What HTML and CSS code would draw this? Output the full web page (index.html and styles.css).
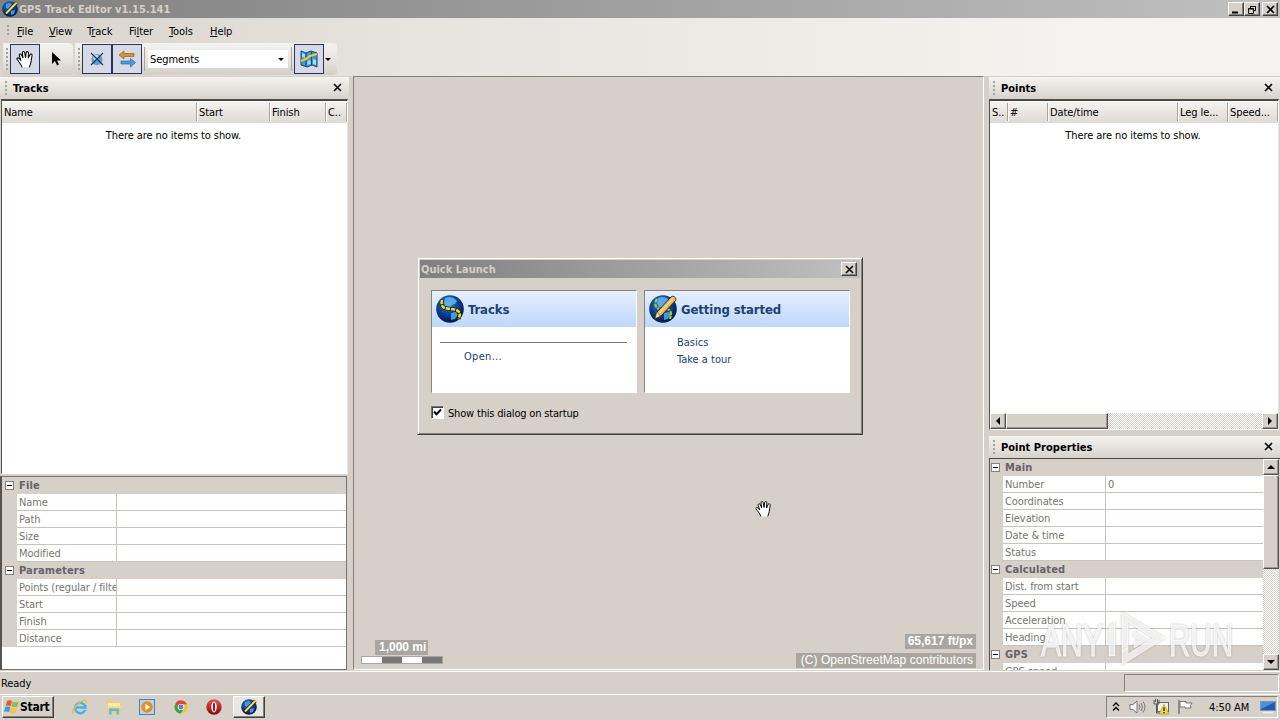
FILE: index.html
```html
<!DOCTYPE html>
<html lang="en">
<head>
<meta charset="utf-8">
<title>GPS Track Editor</title>
<link rel="stylesheet" href="styles.css">
</head>
<body>
<svg class="defs" width="0" height="0">
  <defs>
    <radialGradient id="globeFill" cx="42%" cy="32%" r="66%"><stop offset="0" stop-color="#2f86da"/><stop offset=".55" stop-color="#0c4394"/><stop offset="1" stop-color="#031a48"/></radialGradient>
    <linearGradient id="pencilFill" x1="0" y1="0" x2="1" y2="1"><stop offset="0" stop-color="#ffe9a6"/><stop offset="1" stop-color="#d98a1c"/></linearGradient>
    <linearGradient id="redFill" x1="0" y1="0" x2="0" y2="1"><stop offset="0" stop-color="#e2585a"/><stop offset="1" stop-color="#8c0508"/></linearGradient>
    <symbol id="globe" viewBox="0 0 28 28">
      <circle cx="14" cy="14" r="13.800" fill="url(#globeFill)"/>
      <path d="M9 3c4-2 9-1 12 3l-2 3-3 1-2 3-4-1-2-4z" fill="#6cc0f4" opacity=".75"/>
      <path d="M15 18l5-1 2 3-3 4-4 1z" fill="#58b3ee" opacity=".8"/>
    </symbol>
    <symbol id="globe-track" viewBox="0 0 28 28">
      <use href="#globe"/>
      <path d="M6 5C4.500 10 6.500 13 11 13.500s9 .5 11.500 3 1 5 0 7.500" fill="none" stroke="#101a18" stroke-width="3.800"/>
      <path d="M6 5C4.500 10 6.500 13 11 13.500s9 .5 11.500 3 1 5 0 7.500" fill="none" stroke="#f5e21b" stroke-width="2.500" stroke-dasharray="4.200 1"/>
    </symbol>
    <symbol id="globe-pencil" viewBox="0 0 28 28">
      <use href="#globe"/>
      <path d="M8 4c-3 4-2 8 2 10M17 14c5 0 6 4 4 10" fill="none" stroke="#a8c93a" stroke-width="2.200" stroke-dasharray="4 1"/>
      <path d="M6 23.500l1.600-6L22 2c2-2 6 .5 4.600 3.600L12 21z" fill="url(#pencilFill)" stroke="#3a2508" stroke-width="1"/>
      <path d="M6 23.500l1.600-6 1.800.6 1 2.200 1.600.7z" fill="#f7dfb0" stroke="#3a2508" stroke-width=".5"/>
      <path d="M10 18.500L23.500 4" stroke="#fff1b8" stroke-width="1"/>
    </symbol>
    <symbol id="app" viewBox="0 0 16 16">
      <circle cx="8" cy="8" r="7.800" fill="url(#globeFill)"/>
      <path d="M4 3l4-1 2 2-3 4-3-1zM9 10l4-1-1 4-3 1z" fill="#3c9ceb"/>
      <path d="M3.500 13L14.500 1.800" stroke="#1c160c" stroke-width="3.400"/>
      <path d="M4 12.500L14.500 1.800" stroke="#f9d860" stroke-width="2.100"/>
    </symbol>
    <symbol id="hand" viewBox="0 0 17 17">
      <path d="M5.500 15.500C4.500 12.500 2.500 10.500 1 8.500c-.6-1.200.9-2 1.900-.9L4.500 9.500 3 5c-.4-1.500 1.400-2 2-.5L6.300 7.300 5.700 2.600c-.1-1.500 1.900-1.600 2.100-.1L8.500 7l.6-4.600c.3-1.400 2.200-1.200 2.100.3L10.900 7.500l1.500-3.300c.7-1.300 2.200-.6 1.900.8-.6 4.500-.8 7-2.300 10.500" fill="#fff" stroke="#000" stroke-width=".9"/>
    </symbol>
    <symbol id="cross" viewBox="0 0 9 9"><path d="M1 1l7 7M8 1L1 8" stroke="#000" stroke-width="1.600" fill="none"/></symbol>
  </defs>
</svg>

<div class="screen">
  <header class="titlebar">
    <svg class="i16"><use href="#app"/></svg>
    <span class="title-text">GPS Track Editor v1.15.141</span>
    <span class="win-buttons">
      <i class="btn3d"><svg width="10" height="9"><path d="M1 7.500h6" stroke="#000" stroke-width="2"/></svg></i>
      <i class="btn3d"><svg width="10" height="9"><path d="M3.500 3V1.500h5v4H7M3 1.500h6" fill="none" stroke="#000"/><path d="M1.500 4v4.500h5v-5h-5M1 4h6" fill="none" stroke="#000"/></svg></i>
      <i class="btn3d spaced"><svg width="9" height="9"><use href="#cross"/></svg></i>
    </span>
  </header>

  <div class="rebar">
    <nav class="menu">
      <i class="grip grip-menu"></i>
      <span class="m1"><u>F</u>ile</span><span class="m2"><u>V</u>iew</span><span class="m3">T<u>r</u>ack</span><span class="m4">Fi<u>l</u>ter</span><span class="m5"><u>T</u>ools</span><span class="m6"><u>H</u>elp</span>
    </nav>
    <div class="toolbars">
      <div class="band band-a">
        <i class="grip"></i>
        <span class="tool on"><svg width="19" height="19"><use href="#hand"/></svg></span>
        <span class="tool"><svg width="12" height="16" viewBox="0 0 12 16"><path d="M2 1v12l3-3 2 4.500 2-1L7 9.500h4z" fill="#000"/></svg></span>
      </div>
      <div class="band band-b">
        <i class="grip"></i>
        <span class="tool on"><svg width="18" height="18" viewBox="0 0 18 18"><circle cx="9" cy="9.500" r="5.500" fill="#5b9cd6"/><circle cx="8" cy="7.500" r="2.800" fill="#b5d9f3"/><path d="M3 3l12 12M15 3L3 15" stroke="#1d3445" stroke-width="1.100"/></svg></span>
        <span class="tool on joined"><svg width="18" height="18" viewBox="0 0 18 18"><path d="M1 5l5-4v2.500h10v3H6V9z" fill="#d8912a" stroke="#8b5514" stroke-width=".6"/><path d="M17.500 12.500l-5-4V11H3v3h9.500v3z" fill="#4f9be0" stroke="#205b99" stroke-width=".6"/></svg></span>
        <i class="vsep"></i>
        <span class="combo"><span>Segments</span><i class="drop"></i></span>
        <i class="vsep vsep-b"></i>
        <span class="tool on map-tool"><svg width="20" height="20" viewBox="0 0 20 20"><path d="M2 2l5 2 5-2 6 2v14l-5-2-5 2-6-2z" fill="#3f97cf" stroke="#174873"/><path d="M7 4v14M12.500 2v14" stroke="#174f80"/><path d="M3 4l3 1v4L3 8zM14 10l3 1v5l-3-1zM8.500 12l3-1v4l-3 1z" fill="#a4dcec"/><path d="M2 12l5-2 4-3 7-2" fill="none" stroke="#f0c63b" stroke-width="2.200"/></svg></span>
        <i class="drop drop-map"></i>
      </div>
    </div>
  </div>

  <main class="work">
    <section class="left">
      <div class="pane-head"><i class="grip"></i><b>Tracks</b><svg width="9" height="9"><use href="#cross"/></svg></div>
      <div class="list list-left">
        <div class="cols cols-left"><span>Name</span><span>Start</span><span>Finish</span><span>C..</span></div>
        <p class="empty">There are no items to show.</p>
      </div>
      <div class="props props-left">
        <div class="cat"><i class="minus"></i>File</div>
        <div class="row"><span>Name</span><span></span></div>
        <div class="row"><span>Path</span><span></span></div>
        <div class="row"><span>Size</span><span></span></div>
        <div class="row"><span>Modified</span><span></span></div>
        <div class="cat"><i class="minus"></i>Parameters</div>
        <div class="row"><span>Points (regular / filtered)</span><span></span></div>
        <div class="row"><span>Start</span><span></span></div>
        <div class="row"><span>Finish</span><span></span></div>
        <div class="row"><span>Distance</span><span></span></div>
      </div>
    </section>

    <section class="map">
      <div class="scale"><span class="tag">1,000 mi</span><span class="ruler"><i></i><i></i><i></i><i></i></span></div>
      <div class="credits"><span class="tag">65,617 ft/px</span><span class="tag thin">(C) OpenStreetMap contributors</span></div>
      <svg class="cursor" width="18" height="18"><use href="#hand"/></svg>
    </section>

    <section class="right">
      <div class="pane-head"><i class="grip"></i><b>Points</b><svg width="9" height="9"><use href="#cross"/></svg></div>
      <div class="list list-right">
        <div class="cols cols-right"><span>S..</span><span>#</span><span>Date/time</span><span>Leg le...</span><span>Speed...</span></div>
        <p class="empty">There are no items to show.</p>
        <div class="hscroll"><i class="sb"><b class="tri l"></b></i><i class="sb thumb"></i><i class="sb end"><b class="tri r"></b></i></div>
      </div>
      <div class="pane-head second"><i class="grip"></i><b>Point Properties</b><svg width="9" height="9"><use href="#cross"/></svg></div>
      <div class="props-wrap">
        <div class="props props-right">
          <div class="cat"><i class="minus"></i>Main</div>
          <div class="row"><span>Number</span><span>0</span></div>
          <div class="row"><span>Coordinates</span><span></span></div>
          <div class="row"><span>Elevation</span><span></span></div>
          <div class="row"><span>Date &amp; time</span><span></span></div>
          <div class="row"><span>Status</span><span></span></div>
          <div class="cat"><i class="minus"></i>Calculated</div>
          <div class="row"><span>Dist. from start</span><span></span></div>
          <div class="row"><span>Speed</span><span></span></div>
          <div class="row"><span>Acceleration</span><span></span></div>
          <div class="row"><span>Heading</span><span></span></div>
          <div class="cat"><i class="minus"></i>GPS</div>
          <div class="row"><span>GPS speed</span><span></span></div>
        </div>
        <div class="vscroll"><i class="sb"><b class="tri u"></b></i><i class="sb thumb"></i><i class="sb end"><b class="tri d"></b></i></div>
      </div>
    </section>
  </main>

  <div class="status"><span>Ready</span><i></i></div>

  <footer class="taskbar">
    <span class="start"><svg width="16" height="16" viewBox="0 0 16 16"><path d="M3 2c2-1 3.500-.8 5 .2L6.700 7.300C5.200 6.300 3.500 6.500 1.700 7z" fill="#e8592a"/><path d="M8.700 2.600c2 1 4 .8 6 0l-1.400 5c-2 .9-4 .7-5.800-.3z" fill="#8cc04c"/><path d="M1.400 8c2-.8 3.600-.6 5 .3L5 13.300C3.500 12.300 2 12.400 0 13z" fill="#3f97d8"/><path d="M7.200 8.700c2 1 3.800 1 5.800.2l-1.400 5c-2 .8-4 .7-5.800-.3z" fill="#f7c433"/></svg><b>Start</b></span>
    <span class="quick">
      <svg width="18" height="18" viewBox="0 0 18 18"><path d="M14.200 11.800A5.200 5.200 0 1 1 14.500 9.500H5" fill="none" stroke="#47b1e8" stroke-width="2.400"/><path d="M2 15.500C.5 12.500 6 5 11.500 2.800c3.500-1.400 4.700.1 3.800 2.200" fill="none" stroke="#e9bb3a" stroke-width="1.400"/></svg>
      <svg width="18" height="18" viewBox="0 0 18 18"><path d="M2 2.500h5l1 1.500h8V15H2z" fill="#ecd06f"/><path d="M3 5h12v3H3z" fill="#f9ecae"/><path d="M4 16.500v-6h10v6h-2.500V13h-5v3.500z" fill="#6bb6df"/><path d="M2 8h14v2H2z" fill="#f4df87"/></svg>
      <svg width="18" height="18" viewBox="0 0 18 18"><rect x="1.500" y="1.500" width="15" height="15" fill="#b3d5f1" stroke="#4384bf"/><circle cx="9" cy="9" r="5.800" fill="#f08a1d"/><path d="M7.300 5.800v6.400l5-3.200z" fill="#fff"/></svg>
      <svg width="18" height="18" viewBox="0 0 18 18"><circle cx="9" cy="9" r="6.500" fill="#f5c52b"/><path d="M3.300 5.700A6.500 6.500 0 0 1 14.900 6.200H9L6.300 10.500z" fill="#dc4636"/><path d="M3.200 5.900l3.400 5.400L11 12l-2.200 3.500A6.500 6.500 0 0 1 3.200 5.900z" fill="#33a457"/><circle cx="9" cy="9" r="3.100" fill="#fff"/><circle cx="9" cy="9" r="2.400" fill="#4a80d9"/></svg>
      <svg width="18" height="18" viewBox="0 0 18 18"><circle cx="9" cy="9" r="7.700" fill="url(#redFill)"/><ellipse cx="9" cy="9" rx="2.700" ry="5.400" fill="#fff"/><ellipse cx="9" cy="9" rx="1.100" ry="4.500" fill="#9f1518"/></svg>
    </span>
    <span class="task"><svg class="i16"><use href="#app"/></svg></span>
    <span class="tray">
      <svg width="8" height="12" viewBox="0 0 8 12"><path d="M1 5l3-3 3 3M1 9.500l3-3 3 3" fill="none" stroke="#000" stroke-width="1.400"/></svg>
      <svg class="t-sound" width="18" height="14" viewBox="0 0 18 14"><path d="M1 4.500h3L8 1v12L4 9.500H1z" fill="#fff" stroke="#777"/><path d="M10 4.500q2 2.500 0 5M12 3q3 4 0 8M14 1.500q4 5.500 0 11" fill="none" stroke="#777"/></svg>
      <svg class="t-net" width="17" height="16" viewBox="0 0 17 16"><rect x="4.500" y="3.500" width="11" height="9" fill="#eee" stroke="#666"/><path d="M1 1v4h5V1M2.500 0v3M4.500 0v3M3.500 5v9h4" fill="none" stroke="#555"/><path d="M11 5.500l5 9.500H6z" fill="#f8dd22" stroke="#a88b0b" stroke-width=".6"/><path d="M11 8.500v3.500M11 13v1.200" stroke="#000" stroke-width="1.200"/></svg>
      <svg class="t-flag" width="17" height="16" viewBox="0 0 17 16"><path d="M2 1v14" stroke="#777" stroke-width="1.500"/><path d="M3 2.500h6V4h6l-1.500 2.500L14 9H8V8H3z" fill="#fff" stroke="#777"/></svg>
      <span class="clock">4:50 AM</span>
      <svg class="t-desk" width="16" height="14" viewBox="0 0 16 14"><rect x=".5" y="1.500" width="15" height="9" fill="#1d5cb0" stroke="#7b98b8"/><path d="M1 2h14L1 9z" fill="#4a90dc"/><path d="M3 12.500h10" stroke="#f0f0f0" stroke-width="1.500"/></svg>
    </span>
  </footer>

  <div class="dialog">
    <div class="dlg-title"><span>Quick Launch</span><i class="btn3d"><svg width="9" height="9"><use href="#cross"/></svg></i></div>
    <div class="cards">
      <div class="card">
        <div class="card-head"><svg width="28" height="28"><use href="#globe-track"/></svg><b>Tracks</b></div>
        <hr><a class="open">Open...</a>
      </div>
      <div class="card">
        <div class="card-head"><svg width="28" height="28"><use href="#globe-pencil"/></svg><b>Getting started</b></div>
        <div class="links"><a>Basics</a><a>Take a tour</a></div>
      </div>
    </div>
    <label class="check"><i><svg width="9" height="9"><path d="M1 3.500L3.500 6.200 8 1.500" fill="none" stroke="#000" stroke-width="2"/></svg></i><span>Show this dialog on startup</span></label>
  </div>

  <svg class="watermark" width="200" height="64" viewBox="0 0 200 64">
    <g class="mark-shade">
      <text x="4" y="49" textLength="62" lengthAdjust="spacingAndGlyphs">ANY</text>
      <text x="132" y="49" textLength="64" lengthAdjust="spacingAndGlyphs">RUN</text>
      <path d="M72 49V20l6-5v34zM85 5l43 26-43 27V45l6-4v6l25-16-25-16v26l-6 4z"/>
      <path d="M97 25l13 8-13 8v-5l5-3-5-3z"/>
    </g>
  </svg>
</div>
</body>
</html>
```
FILE: styles.css
```css
* { box-sizing: border-box; }
body { margin: 0; width: 1280px; height: 720px; overflow: hidden; background: #d6d0c8; }
.defs { position: absolute; }
i { font-style: normal; display: block; flex: none; }
svg { display: block; flex: none; }
b, .cat, .title-text, .dlg-title { letter-spacing: 0; }
.i16 { width: 16px; height: 16px; }
.screen { position: relative; width: 1280px; height: 720px; display: flex; flex-direction: column; background: #d6d0c8; font: 11px/17px "DejaVu Sans Condensed", "DejaVu Sans", sans-serif; letter-spacing: -0.08px; color: #000; white-space: nowrap; }

/* raised classic button */
.btn3d { width: 16px; height: 14px; background: #d6d0c8; border: 1px solid; border-color: #fff #404040 #404040 #fff; box-shadow: inset -1px -1px #868078; display: flex; align-items: center; justify-content: center; }
.spaced { margin-left: 2px; }

.titlebar { height: 18px; flex: none; display: flex; align-items: center; padding: 0 2px 0 2px; background: linear-gradient(90deg, #808080, #c0c0c0); color: #d6d0c8; }
.title-text { font-weight: bold; margin-left: 1px; }
.win-buttons { display: flex; margin-left: auto; }

.rebar { height: 58px; flex: none; background: linear-gradient(90deg, #d8d4cc 0, #e6e2dc 30%, #f5f2ef 85%); }
.menu { height: 25px; display: flex; align-items: center; padding: 1px 0 0 7px; }
.menu span { width: 40px; }
.menu .m1 { width: 32px; margin-left: 7px; }
.menu .m2 { width: 38px; }
.menu .m3 { width: 42px; }
.menu .m5 { width: 41px; }
.grip { width: 3px; height: 22px; background: repeating-linear-gradient(180deg, #a5a19b 0 2px, transparent 2px 4px); background-size: 2px 100%; background-repeat: no-repeat; }
.grip-menu { height: 12px; }
.toolbars { display: flex; padding: 0 0 0 3px; }
.band { display: flex; align-items: center; height: 32px; border-radius: 0 4px 4px 0; background: linear-gradient(180deg, #f5f3f0, #e7e4df 55%, #d3cec6); }
.band-a { width: 70px; padding-left: 3px; margin-right: 2px; }
.band-b { width: 262px; padding-left: 3px; }
.tool { width: 30px; height: 30px; display: flex; align-items: center; justify-content: center; margin-left: 1px; }
.tool.on { border: 1px solid #26355f; background: #d7dae4; }
.tool.joined { margin-left: 0; margin-right: -1px; }
.vsep { width: 1px; height: 24px; background: #aaa69f; margin-left: 3px; }
.combo { width: 140px; height: 18px; background: #fff; margin-left: 3px; padding: 0 4px 0 2px; display: flex; align-items: center; justify-content: space-between; }
.drop { width: 0; height: 0; border: 3px solid transparent; border-top-color: #000; border-bottom: 0; }
.vsep-b { margin-left: 3px; }
.map-tool { margin-left: 2px; }
.drop-map { margin-left: 1px; }

.work { height: 595px; flex: none; display: flex; border-bottom: 1px solid #d6d0c8; }
.left { width: 349px; padding-top: 1px; flex: none; }
.pane-head { height: 23px; display: flex; align-items: center; padding: 0 7px 1px 5px; background: linear-gradient(180deg, #f5f3f0, #d6d1c9); }
.pane-head .grip { height: 14px; }
.pane-head b { margin-left: 5px; flex: 1; letter-spacing: 0.03px; }
.pane-head svg { margin-bottom: 2px; }
.list { border: 1px solid #55524e; border-top: 2px solid #4c4a46; background: #fff; margin: -1px 1px 0 1px; border-right-color: #e8e4de; border-bottom-color: #fff; }
.list-left { height: 375px; }
.cols { height: 22px; display: flex; align-items: center; background: linear-gradient(180deg, #f6f4f1, #ddd9d3); }
.cols span { border-right: 1px solid #a9a49b; box-shadow: 1px 0 #fff; height: 18px; line-height: 19px; padding-left: 2px; overflow: hidden; }
.cols-left { display: grid; grid-template-columns: 195px 73px 56px 21px; }
.cols-right { display: grid; grid-template-columns: 18px 40px 130px 50px 50px; align-items: center; }
.empty { margin: 3px 2px 0 0; text-align: center; line-height: 19px; }
.props { background: #fff; color: #77756f; border: 1px solid #77736e; border-left: 2px solid #56534f; line-height: 17px; overflow: hidden; }
.props-left { margin: 2px 2px 0 0; height: 194px; }
.cat { height: 17px; background: #d6d0c8; color: #66636b; font-weight: bold; display: flex; align-items: center; padding-left: 3px; line-height: 16px; letter-spacing: 0.15px; }
.minus { width: 9px; height: 9px; border: 1px solid #85817a; background: linear-gradient(#000, #000) center/5px 1px no-repeat #fff; margin-right: 5px; }
.row { height: 17px; display: flex; border-left: 15px solid #d6d0c8; }
.row span { border-bottom: 1px solid #c8c4bd; overflow: hidden; padding-left: 3px; flex: 1; }
.row span:first-child { flex: none; width: 100px; border-right: 1px solid #c8c4bd; padding-left: 2px; }

.map { position: relative; width: 631px; margin-left: 4px; flex: none; border: 1px solid #85817b; border-right-color: #fff; border-bottom-color: #fff; font-family: "Liberation Sans", Arial, sans-serif; letter-spacing: 0; color: #fff; }
.scale { position: absolute; left: 7px; bottom: 5px; }
.tag { display: block; width: fit-content; height: 15px; line-height: 15px; padding: 0 3px 0 3px; font-size: 12px; font-weight: bold; background: #aaa69f; }
.scale .tag { margin-left: 14px; width: 53px; padding-left: 4px; padding-right: 0; }
.ruler { display: flex; margin-top: 1px; width: 82px; height: 8px; border: 1px solid #aaa69f; }
.ruler i { flex: 1; background: #fff; }
.ruler i:nth-child(even) { background: #777; }
.credits { position: absolute; right: 7px; bottom: 1px; display: flex; flex-direction: column; align-items: flex-end; gap: 4px; }
.tag.thin { font-weight: normal; padding-left: 5px; letter-spacing: 0.05px; }
.cursor { position: absolute; left: 401px; top: 423px; }

.right { width: 291px; margin-left: 5px; padding-top: 1px; flex: none; }
.right .pane-head { padding-left: 4px; }
.list-right { height: 331px; margin: -1px 1px 0 0; display: flex; flex-direction: column; }
.hscroll { margin-top: auto; height: 16px; display: flex; background: repeating-conic-gradient(#fff 0 25%, #d6d0c8 0 50%) 0 0/2px 2px; }
.sb { width: 16px; height: 16px; background: #d6d0c8; border: 1px solid; border-color: #fff #55524e #55524e #fff; box-shadow: inset -1px -1px #9b968f; display: flex; align-items: center; justify-content: center; }
.hscroll .thumb { width: 102px; }
.hscroll .end { margin-left: auto; }
.tri { width: 0; height: 0; border: 4px solid transparent; }
.tri.l { border-right-color: #000; border-left: 0; }
.tri.r { border-left-color: #000; border-right: 0; }
.tri.u { border-bottom-color: #000; border-top: 0; }
.tri.d { border-top-color: #000; border-bottom: 0; }
.right .second { margin-top: 6px; }
.props-wrap { height: 212px; display: flex; margin-top: -1px; border-top: 1px solid #4c4a46; }
.props-right { flex: 1; border-top: 0; border-right: 0; border-bottom: 0; border-left-width: 1px; }
.props-right .cat { padding-left: 1px; }
.props-right .row { border-left-width: 13px; }
.props-right .row span { padding-left: 2px; }
.props-right .row span:first-child { width: 103px; }
.vscroll { width: 16px; margin-right: 1px; display: flex; flex-direction: column; background: repeating-conic-gradient(#fff 0 25%, #d6d0c8 0 50%) 0 0/2px 2px; }
.vscroll .thumb { height: 94px; }
.vscroll .end { margin-top: auto; }

.status { height: 23px; flex: none; border-top: 1px solid #fff; display: flex; justify-content: space-between; padding: 3px 1px 2px 1px; }
.status i { width: 155px; height: 18px; margin-top: -1px; border: 1px solid #85817a; border-right-color: #fff; border-bottom-color: #fff; }

.taskbar { height: 26px; flex: none; border-top: 1px solid #fff; display: flex; padding: 0 2px 2px 2px; }
.start, .task { border: 1px solid; border-color: #fff #404040 #404040 #fff; box-shadow: inset -1px -1px #868078; display: flex; align-items: center; height: 22px; margin-top: 1px; }
.start { width: 52px; padding-left: 1px; }
.start b { font-size: 12px; letter-spacing: -0.25px; }
.quick { display: flex; align-items: center; gap: 15.500px; margin-left: 17px; width: 162px; }
.task { width: 32px; justify-content: center; background: #e9e6e1; }
.tray { margin-left: auto; margin-top: 1px; width: 172px; height: 22px; border: 1px solid #85817a; border-right-color: #fff; border-bottom-color: #fff; display: flex; align-items: center; padding-left: 5px; }
.t-sound { margin-left: 9px; }
.t-net { margin-left: 6px; }
.t-flag { margin-left: 7px; }
.clock { margin-left: 15px; width: 42px; }
.t-desk { margin-left: 9px; }

.dialog { position: absolute; left: 417px; top: 257px; width: 446px; height: 178px; background: #d6d0c8; border: 1px solid; border-color: #d6d0c8 #404040 #404040 #d6d0c8; box-shadow: inset 1px 1px #fff, inset -1px -1px #85817a; padding: 2px; }
.dlg-title { height: 18px; background: linear-gradient(90deg, #808080, #c0c0c0); display: flex; align-items: center; justify-content: space-between; padding: 0 3px 0 1px; color: #d6d0c8; font-weight: bold; }
.cards { display: flex; gap: 7px; margin: 12px 0 0 11px; }
.card { width: 206px; height: 103px; background: #fff; border: 1px solid #85817a; border-right-color: #fff; border-bottom-color: #fff; color: #1d4173; }
.card-head { height: 36px; display: flex; align-items: center; padding-left: 4px; background: linear-gradient(180deg, #e6effd, #bed7fb); }
.card-head b { font-size: 13px; margin-left: 4px; letter-spacing: -0.1px; }
.card hr { margin: 15px 9px 0 8px; border: 0; height: 1px; background: #77757a; }
.card a { display: block; }
.open { margin: 5px 0 0 32px; letter-spacing: 0.3px; }
.links { margin: 7px 0 0 32px; letter-spacing: 0; }
.check { display: flex; align-items: center; margin: 11px 0 0 11px; }
.check i { width: 13px; height: 13px; margin-top: -1px; background: #fff; border: 1px solid; border-color: #77736e #fff #fff #77736e; box-shadow: inset 1px 1px #404040; padding: 1px; }
.check span { margin-left: 4px; letter-spacing: -0.18px; padding-top: 1px; }

.watermark { position: absolute; left: 1037px; top: 607px; filter: drop-shadow(0 0 1px rgba(110, 108, 105, 0.55)); }
.mark-shade { fill: #fff; fill-opacity: 0.75; stroke: #fff; stroke-opacity: 0.6; stroke-width: 1px; }
.watermark text { font: 44px "Liberation Sans Narrow", "Liberation Sans", Arial, sans-serif; letter-spacing: 0; stroke-width: 1.5px; }
```
